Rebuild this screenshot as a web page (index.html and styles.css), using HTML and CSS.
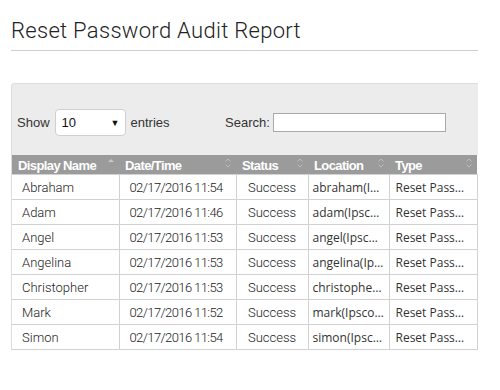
FILE: index.html
```html
<!DOCTYPE html>
<html>
<head>
  <meta charset="UTF-8">
  <title>Reset Password Audit Report</title>
  <link rel="stylesheet" href="styles.css">
</head>
<body>
  <div class="page">
    <h1>Reset Password Audit Report</h1>

    <div class="panel">
      <div class="controls">
        <div class="length">
          <span>Show</span>
          <div class="select"><span>10</span><span class="caret">&#9660;</span></div>
          <span>entries</span>
        </div>
        <div class="search">
          <label for="search">Search:</label>
          <input type="text" id="search">
        </div>
      </div>

      <table class="audit">
        <colgroup>
          <col class="c-name"><col class="c-date"><col class="c-status"><col class="c-loc"><col class="c-type">
        </colgroup>
        <thead>
          <tr>
            <th><span>Display Name</span><svg class="sort" width="8" height="12" viewBox="0 0 8 12"><path d="M1 5 L4 2 L7 5 Z" fill="#c8c8c8"/></svg></th>
            <th><span>Date/Time</span><svg class="sort" width="8" height="12" viewBox="0 0 8 12"><path d="M1.5 4.5 L4 2 L6.5 4.5 M1.5 7.5 L4 10 L6.5 7.5" fill="none" stroke="#bdbdbd" stroke-width="1"/></svg></th>
            <th><span>Status</span><svg class="sort" width="8" height="12" viewBox="0 0 8 12"><path d="M1.5 4.5 L4 2 L6.5 4.5 M1.5 7.5 L4 10 L6.5 7.5" fill="none" stroke="#bdbdbd" stroke-width="1"/></svg></th>
            <th><span>Location</span><svg class="sort" width="8" height="12" viewBox="0 0 8 12"><path d="M1.5 4.5 L4 2 L6.5 4.5 M1.5 7.5 L4 10 L6.5 7.5" fill="none" stroke="#bdbdbd" stroke-width="1"/></svg></th>
            <th><span>Type</span><svg class="sort" width="8" height="12" viewBox="0 0 8 12"><path d="M1.5 4.5 L4 2 L6.5 4.5 M1.5 7.5 L4 10 L6.5 7.5" fill="none" stroke="#bdbdbd" stroke-width="1"/></svg></th>
          </tr>
        </thead>
        <tbody>
          <tr><td>Abraham</td><td class="date">02/17/2016 11:54</td><td class="status">Success</td><td class="clip">abraham(Ipscorp)</td><td class="clip">Reset Password</td></tr>
          <tr><td>Adam</td><td class="date">02/17/2016 11:46</td><td class="status">Success</td><td class="clip">adam(Ipscorp)</td><td class="clip">Reset Password</td></tr>
          <tr><td>Angel</td><td class="date">02/17/2016 11:53</td><td class="status">Success</td><td class="clip">angel(Ipscorp)</td><td class="clip">Reset Password</td></tr>
          <tr><td>Angelina</td><td class="date">02/17/2016 11:53</td><td class="status">Success</td><td class="clip">angelina(Ipscorp)</td><td class="clip">Reset Password</td></tr>
          <tr><td>Christopher</td><td class="date">02/17/2016 11:53</td><td class="status">Success</td><td class="clip">christopher(Ipscorp)</td><td class="clip">Reset Password</td></tr>
          <tr><td>Mark</td><td class="date">02/17/2016 11:52</td><td class="status">Success</td><td class="clip">mark(Ipscorp)</td><td class="clip">Reset Password</td></tr>
          <tr><td>Simon</td><td class="date">02/17/2016 11:54</td><td class="status">Success</td><td class="clip">simon(Ipscorp)</td><td class="clip">Reset Password</td></tr>
        </tbody>
      </table>
    </div>
  </div>
</body>
</html>
```

FILE: styles.css
```css
body {
  margin: 0;
  background-color: #fff;
  color: #333;
  font-family: 'Liberation Sans', Arial, sans-serif;
  font-size: 13px;
}
.page {
  width: 467px;
  padding: 0 0 0 11px;
}
h1 {
  font-family: 'Roboto', sans-serif;
  font-weight: 300;
  font-size: 22px;
  letter-spacing: 0.3px;
  line-height: 26px;
  color: #222;
  margin: 0;
  padding: 18px 0 6px 0;
  border-bottom: 1px solid #cfcfcf;
}
.panel {
  margin-top: 32px;
  width: 466px;
  background-color: #ececec;
  border-top: 1px solid #dcdcdc;
  border-left: 1px solid #dcdcdc;
  border-top-left-radius: 4px;
}
.controls {
  display: flex;
  align-items: center;
  padding: 25px 0 19px 5px;
}
.length {
  display: flex;
  align-items: center;
  gap: 5px;
  width: 208px;
}
.select {
  display: flex;
  align-items: center;
  justify-content: space-between;
  box-sizing: border-box;
  width: 71px;
  height: 27px;
  padding: 0 5px 0 6px;
  background-color: #fff;
  border: 1px solid #cfcfcf;
  border-radius: 4px;
  color: #111;
}
.caret {
  font-size: 9px;
}
.search {
  display: flex;
  align-items: center;
  gap: 3px;
}
.search input {
  box-sizing: border-box;
  width: 173px;
  height: 19px;
  margin: 0;
  border: 1px solid #a9a9a9;
  background-color: #fff;
}
.audit {
  width: 465px;
  table-layout: fixed;
  border-collapse: collapse;
  background-color: #fff;
}
.c-name { width: 107px; }
.c-date { width: 117px; }
.c-status { width: 72px; }
.c-loc { width: 81px; }
.c-type { width: 88px; }
.audit th {
  background-color: #9b9b9b;
  color: #fff;
  font-family: 'Liberation Sans', Arial, sans-serif;
  font-weight: bold;
  font-size: 13px;
  letter-spacing: -0.6px;
  text-align: left;
  height: 19px;
  padding: 0 4px 0 6px;
  white-space: nowrap;
}
.audit th span {
  display: inline-block;
  vertical-align: middle;
}
.sort {
  float: right;
  margin-top: 1px;
}
.audit td {
  height: 24px;
  padding: 0 5px 0 10px;
  border: 1px solid #d2d2d2;
  font-family: 'Roboto', sans-serif;
  font-weight: 300;
  font-size: 13px;
  color: #222;
  white-space: nowrap;
}
.audit td:first-child {
  border-left: none;
}
.audit td.date {
  letter-spacing: -0.6px;
}
.audit td.status {
  text-align: center;
  padding: 0;
}
.audit td.clip {
  font-family: 'Open Sans', sans-serif;
  font-weight: 400;
  font-size: 12px;
  color: #333;
  padding: 0 4px 0 4px;
  overflow: hidden;
  text-overflow: ellipsis;
}
.audit td.clip:last-child {
  padding-left: 6px;
}
```
